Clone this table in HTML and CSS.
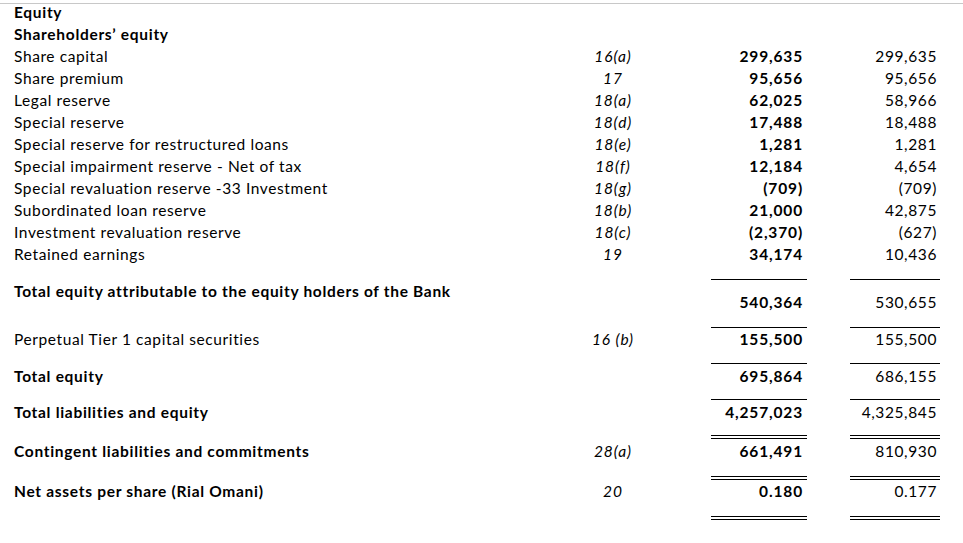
FILE: index.html
```html
<!DOCTYPE html>
<html>
<head>
<meta charset="utf-8">
<link rel="stylesheet" href="styles.css">
</head>
<body>
<div class="topline"></div>
<div class="sheet">
  <div class="row first b"><div class="lbl">Equity</div></div>
  <div class="row b"><div class="lbl">Shareholders’ equity</div></div>
  <div class="row"><div class="lbl">Share capital</div><div class="note">16(a)</div><div class="c1">299,635</div><div class="c2">299,635</div></div>
  <div class="row"><div class="lbl">Share premium</div><div class="note">17</div><div class="c1">95,656</div><div class="c2">95,656</div></div>
  <div class="row"><div class="lbl">Legal reserve</div><div class="note">18(a)</div><div class="c1">62,025</div><div class="c2">58,966</div></div>
  <div class="row"><div class="lbl">Special reserve</div><div class="note">18(d)</div><div class="c1">17,488</div><div class="c2">18,488</div></div>
  <div class="row"><div class="lbl">Special reserve for restructured loans</div><div class="note">18(e)</div><div class="c1">1,281</div><div class="c2">1,281</div></div>
  <div class="row"><div class="lbl">Special impairment reserve - Net of tax</div><div class="note">18(f)</div><div class="c1">12,184</div><div class="c2">4,654</div></div>
  <div class="row"><div class="lbl">Special revaluation reserve -33 Investment</div><div class="note">18(g)</div><div class="c1">(709)</div><div class="c2">(709)</div></div>
  <div class="row"><div class="lbl">Subordinated loan reserve</div><div class="note">18(b)</div><div class="c1">21,000</div><div class="c2">42,875</div></div>
  <div class="row"><div class="lbl">Investment revaluation reserve</div><div class="note">18(c)</div><div class="c1">(2,370)</div><div class="c2">(627)</div></div>
  <div class="row"><div class="lbl">Retained earnings</div><div class="note">19</div><div class="c1">34,174</div><div class="c2">10,436</div></div>

  <div class="rule gap14"><span class="r1"></span><span class="r2"></span></div>
  <div class="row tall"><div class="lbl b">Total equity attributable to the equity holders of the Bank</div><div class="note"></div><div class="c1 low">540,364</div><div class="c2 low">530,655</div></div>
  <div class="rule"><span class="r1"></span><span class="r2"></span></div>
  <div class="row h35"><div class="lbl">Perpetual Tier 1 capital securities</div><div class="note">16 (b)</div><div class="c1">155,500</div><div class="c2">155,500</div></div>
  <div class="rule"><span class="r1"></span><span class="r2"></span></div>
  <div class="row h35 down1"><div class="lbl b">Total equity</div><div class="note"></div><div class="c1">695,864</div><div class="c2">686,155</div></div>
  <div class="rule"><span class="r1"></span><span class="r2"></span></div>
  <div class="row h35 down1"><div class="lbl b">Total liabilities and equity</div><div class="note"></div><div class="c1">4,257,023</div><div class="c2">4,325,845</div></div>
  <div class="rule dbl"><span class="r1"></span><span class="r2"></span></div>
  <div class="row h37 down1"><div class="lbl b">Contingent liabilities and commitments</div><div class="note">28(a)</div><div class="c1">661,491</div><div class="c2">810,930</div></div>
  <div class="rule dbl"><span class="r1"></span><span class="r2"></span></div>
  <div class="row h36"><div class="lbl b">Net assets per share (Rial Omani)</div><div class="note">20</div><div class="c1">0.180</div><div class="c2">0.177</div></div>
  <div class="rule dbl"><span class="r1"></span><span class="r2"></span></div>
</div>
</body>
</html>
```

FILE: styles.css
```css
html, body {
  margin: 0;
  padding: 0;
  background: #ffffff;
}

body {
  width: 963px;
  height: 543px;
  overflow: hidden;
  font-family: Lato, "Liberation Sans", sans-serif;
  font-size: 15.5px;
  letter-spacing: 0.6px;
  color: #000;
}

.topline {
  margin-top: 3px;
  height: 1px;
  background: #c8c8c8;
}

.sheet {
  display: flex;
  flex-direction: column;
}

.row {
  display: grid;
  grid-template-columns: 574px 78px 155px 133px;
  height: 22px;
  line-height: 22px;
  white-space: nowrap;
}

.row.first {
  height: 19px;
  line-height: 16px;
}

.lbl {
  padding-left: 14px;
}

.b {
  font-weight: bold;
  letter-spacing: 0.7px;
}

.note {
  text-align: center;
  font-style: italic;
  letter-spacing: 0.9px;
}

.c1 {
  text-align: right;
  padding-right: 4px;
  font-weight: bold;
  letter-spacing: 0.85px;
}

.c2 {
  text-align: right;
  padding-right: 3px;
  letter-spacing: 0.6px;
}

.rule {
  display: grid;
  grid-template-columns: 574px 78px 155px 133px;
  height: 1px;
}

.rule.gap14 {
  margin-top: 14px;
}

.r1 {
  grid-column: 3;
  margin-left: 59px;
  border-top: 1px solid #000;
}

.r2 {
  grid-column: 4;
  margin-left: 43px;
  border-top: 1px solid #000;
}

.rule.dbl {
  height: 4px;
}

.rule.dbl .r1,
.rule.dbl .r2 {
  height: 2px;
  border-bottom: 1px solid #000;
}

.row.tall {
  height: 47px;
}

.low {
  padding-top: 11px;
}

.row.h35 {
  height: 35px;
}

.row.h36 {
  height: 36px;
}

.row.h37 {
  height: 37px;
}

.row.down1 > div {
  padding-top: 1px;
}
```
